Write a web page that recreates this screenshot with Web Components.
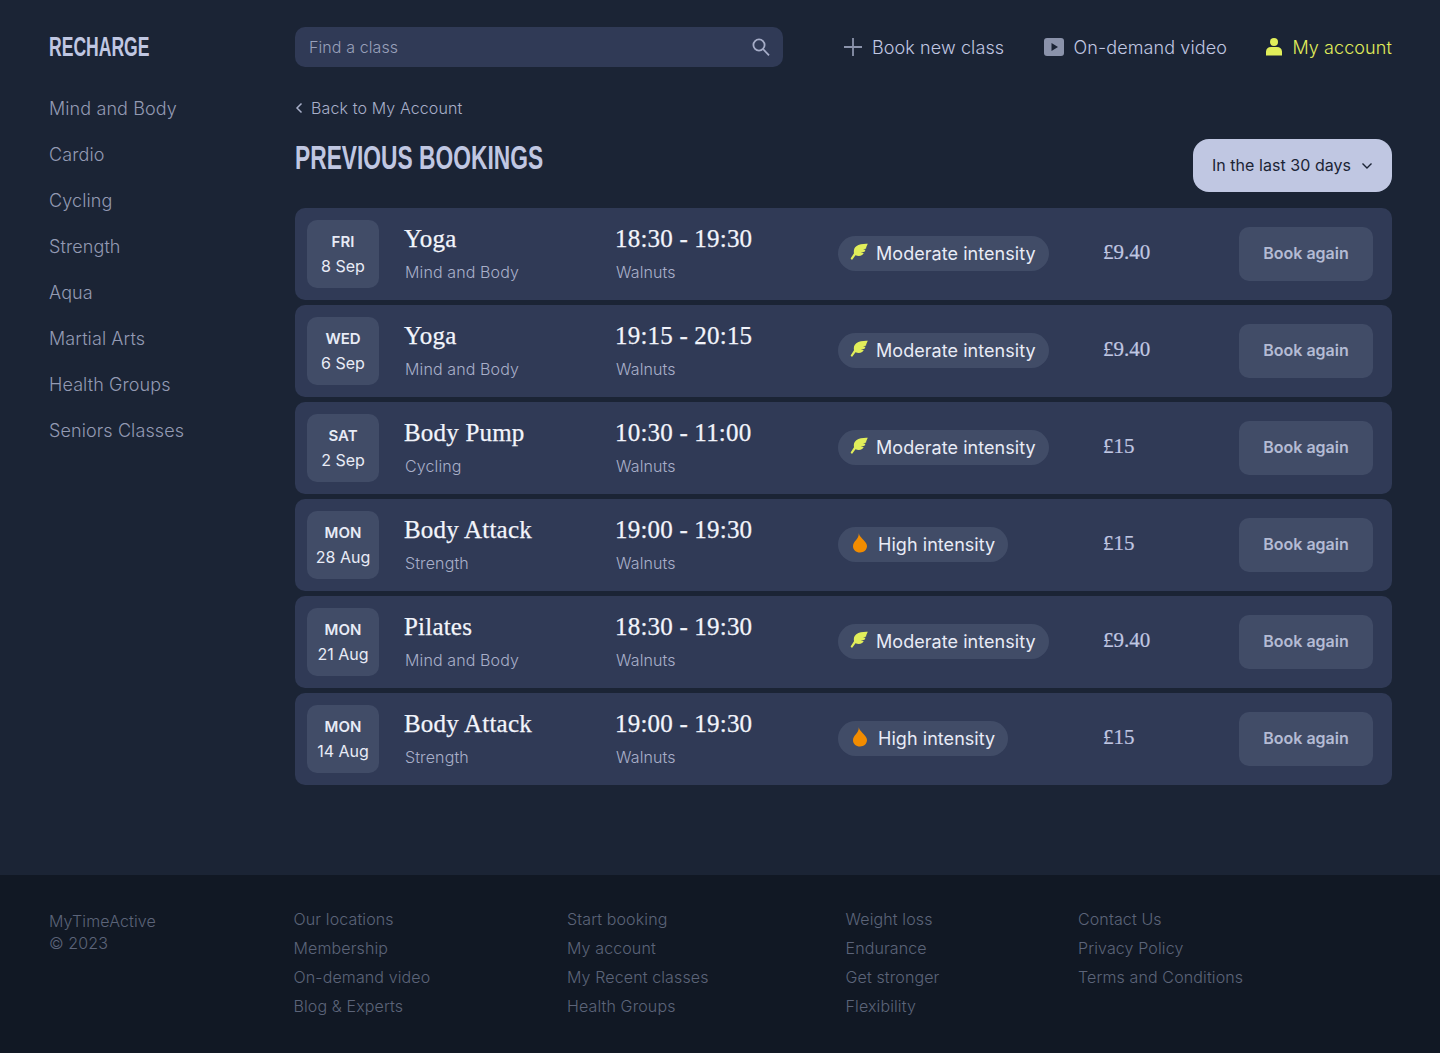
<!DOCTYPE html>
<html lang="en">
<head>
<meta charset="utf-8">
<title>Recharge - Previous bookings</title>
<style>
  html, body { margin: 0; background: #1b2435; }
  body { font-family: Inter, "Liberation Sans", sans-serif; min-height: 1053px; display: flex; flex-direction: column; }
</style>
</head>
<body>
<page-shell>
  <side-nav slot="side"></side-nav>
  <top-bar slot="top"></top-bar>
  <bookings-head></bookings-head>
  <booking-row day="FRI" date="8 Sep" name="Yoga" cat="Mind and Body" time="18:30 - 19:30" level="moderate" price="£9.40"></booking-row>
  <booking-row day="WED" date="6 Sep" name="Yoga" cat="Mind and Body" time="19:15 - 20:15" level="moderate" price="£9.40"></booking-row>
  <booking-row day="SAT" date="2 Sep" name="Body Pump" cat="Cycling" time="10:30 - 11:00" level="moderate" price="£15"></booking-row>
  <booking-row day="MON" date="28 Aug" name="Body Attack" cat="Strength" time="19:00 - 19:30" level="high" price="£15"></booking-row>
  <booking-row day="MON" date="21 Aug" name="Pilates" cat="Mind and Body" time="18:30 - 19:30" level="moderate" price="£9.40"></booking-row>
  <booking-row day="MON" date="14 Aug" name="Body Attack" cat="Strength" time="19:00 - 19:30" level="high" price="£15"></booking-row>
</page-shell>
<site-footer></site-footer>

<script>
// page frame: sidebar column + topbar + main list
class PageShell extends HTMLElement {
  connectedCallback() {
    this.attachShadow({ mode: "open" }).innerHTML = `
      <style>
        :host { display: grid; grid-template-columns: 246px 1fr; height: 875px; padding: 0 48px 0 49px; box-sizing: border-box; }
        .list { display: flex; flex-direction: column; gap: 5px; }
      </style>
      <slot name="side"></slot>
      <div>
        <slot name="top"></slot>
        <div class="list"><slot></slot></div>
      </div>`;
  }
}

class SideNav extends HTMLElement {
  connectedCallback() {
    const items = ["Mind and Body", "Cardio", "Cycling", "Strength", "Aqua", "Martial Arts", "Health Groups", "Seniors Classes"];
    this.attachShadow({ mode: "open" }).innerHTML = `
      <style>
        :host { display: block; }
        .logo { font: 700 27px/30px "Liberation Sans", sans-serif; color: #c0c7e2; margin-top: 32px; height: 30px; }
        .logo span { display: inline-block; transform: scaleX(.65); transform-origin: left; }
        ul { list-style: none; margin: 36px 0 0; padding: 0; display: flex; flex-direction: column; gap: 24px; }
        li { font: 300 18px/22px Inter, sans-serif; letter-spacing: .1px; color: #939ab3; }
      </style>
      <div class="logo"><span>RECHARGE</span></div>
      <ul>${items.map((i) => `<li>${i}</li>`).join("")}</ul>`;
  }
}

class TopBar extends HTMLElement {
  connectedCallback() {
    this.attachShadow({ mode: "open" }).innerHTML = `
      <style>
        :host { display: flex; align-items: center; padding-top: 27px; font: 300 18px/22px Inter, sans-serif; letter-spacing: .1px; color: #c0c7e2; }
        .search { width: 488px; height: 40px; box-sizing: border-box; background: #303a56; border-radius: 10px; padding: 0 12px 0 14px; display: flex; align-items: center; justify-content: space-between; margin-right: 61px; font-size: 16px; color: #98a0ba; }
        nav { display: flex; flex: 1; justify-content: space-between; align-items: center; }
        a { display: flex; align-items: center; gap: 10px; white-space: nowrap; }
        a span { margin-top: 2px; }
        a.me { color: #e1ee5a; }
        svg { display: block; flex: none; }
      </style>
      <div class="search">
        <span>Find a class</span>
        <svg width="20" height="20" viewBox="0 0 20 20" fill="none" stroke="#a6adc8" stroke-width="1.8"><circle cx="8" cy="8" r="5.6"/><path d="M12 12l6 6.4"/></svg>
      </div>
      <nav>
        <a><svg width="18" height="18" viewBox="0 0 18 18" stroke="#8b93ab" stroke-width="1.8"><path d="M9 0v18M0 9h18"/></svg><span>Book new class</span></a>
        <a><svg width="20" height="18" viewBox="0 0 20 18"><rect width="20" height="18" rx="3" fill="#8b93ab"/><path d="M7.500 5l6.500 4-6.500 4z" fill="#1b2435"/></svg><span>On-demand video</span></a>
        <a class="me"><svg width="16" height="18" viewBox="0 0 16 18" fill="#e1ee5a"><circle cx="8" cy="4" r="4"/><path d="M0 17.500v-4a5 5 0 0 1 5-4.500h6a5 5 0 0 1 5 4.500v4z"/></svg><span>My account</span></a>
      </nav>`;
  }
}

class BookingsHead extends HTMLElement {
  connectedCallback() {
    this.attachShadow({ mode: "open" }).innerHTML = `
      <style>
        :host { display: block; padding-top: 31px; margin-bottom: 11px; }
        .back { display: flex; align-items: center; gap: 8px; font: 300 16px/20px Inter, sans-serif; letter-spacing: .12px; color: #a8afc9; height: 20px; }
        .row { display: flex; justify-content: space-between; align-items: flex-start; margin-top: 21px; }
        h1 { margin: -2px 0 0; font: 700 34px/40px "Liberation Sans", sans-serif; color: #c0c7e2; transform: scaleX(.67); transform-origin: left; white-space: nowrap; }
        .filter { width: 199px; height: 53px; box-sizing: border-box; padding-bottom: 1px; background: #c0c7e2; border-radius: 16px; color: #1b2435; font: 400 16px/20px Inter, sans-serif; letter-spacing: .05px; display: flex; align-items: center; justify-content: center; gap: 9px; }
        .filter svg { margin: 2px 0 0 1px; }
      </style>
      <div class="back"><svg width="8" height="12" viewBox="0 0 8 12" fill="none" stroke="#a8afc9" stroke-width="1.5"><path d="M6.500 1.500L2 6l4.500 4.500"/></svg>Back to My Account</div>
      <div class="row">
        <h1>PREVIOUS BOOKINGS</h1>
        <div class="filter">In the last 30 days<svg width="12" height="8" viewBox="0 0 12 8" fill="none" stroke="#1b2435" stroke-width="1.4"><path d="M1.500 1.500L6 6l4.500-4.500"/></svg></div>
      </div>`;
  }
}

class IntensityPill extends HTMLElement {
  connectedCallback() {
    const high = this.getAttribute("level") === "high";
    const leaf = `<svg width="18" height="18" viewBox="0 0 18 18"><path d="M17.800.8C13.500.6 9.200 1.200 6.300 3.300 4 5 3.500 7.500 4 10.200L.6 15.600 2 17l3.500-4.700c2.300 1 4.600 1 6.600-.2.900-.6 1.400-1.300 1.600-2l-3-.3 3.800-1c.5-.7.800-1.400.9-2.100l-2.300-.2 3-1C16.100 4.100 17 2.500 17.800.8z" fill="#e1ee5a"/></svg>`;
    const flame = `<svg width="16" height="20" viewBox="0 0 16 20"><path d="M6.800.3c.4 2.400 2 3.800 3.700 5.700C12.300 8 15 10 15 13.100 15 16.900 12 19.500 8 19.500s-7-2.600-7-6.300c0-2.500 1.300-4.300 2.900-6C5.500 5.500 6.800 3.600 6.800.3z" fill="#f28c00"/></svg>`;
    this.attachShadow({ mode: "open" }).innerHTML = `
      <style>
        :host { display: inline-flex; align-items: center; height: 35px; margin-top: -2px; box-sizing: border-box; background: #414c67; border-radius: 18px; color: #e8ebf6; font: 400 18px/22px Inter, sans-serif; letter-spacing: .05px; white-space: nowrap; padding: 1px 13px 0 ${high ? 14 : 12}px; gap: ${high ? 10 : 8}px; vertical-align: top; }
        svg { display: block; flex: none; margin-top: -3px; }
      </style>
      ${high ? flame : leaf}<slot></slot>`;
  }
}

class BookingRow extends HTMLElement {
  connectedCallback() {
    const a = (n) => this.getAttribute(n) || "";
    const label = a("level") === "high" ? "High intensity" : "Moderate intensity";
    this.attachShadow({ mode: "open" }).innerHTML = `
      <style>
        :host { display: grid; grid-template-columns: 97px 211px 223px 265px 1fr 134px; align-items: center; height: 92px; box-sizing: border-box; padding: 0 19px 0 12px; background: #303a56; border-radius: 10px; }
        .date { width: 72px; height: 68px; padding-bottom: 2px; box-sizing: border-box; background: #414c67; border-radius: 10px; display: flex; flex-direction: column; align-items: center; justify-content: center; color: #e8ebf6; font: 400 16px/24px Inter, sans-serif; }
        .date b { font-weight: 600; font-size: 15px; margin-top: 1px; }
        .main { font: 400 25px/30px "Liberation Serif", serif; letter-spacing: .2px; -webkit-text-stroke: .25px #f2f4fb; color: #f2f4fb; }
        .sub { font: 300 16px/20px Inter, sans-serif; letter-spacing: .12px; color: #a8afc9; margin: 8px 0 0 1px; -webkit-text-stroke: 0; }
        .cell { margin-top: -3px; }
        .price { font: 400 21px/24px "Liberation Serif", serif; -webkit-text-stroke: .2px #c0c7e2; color: #c0c7e2; margin-top: -4px; }
        .again { height: 54px; background: #414c67; border-radius: 10px; color: #b4bbd4; font: 600 16px/53px Inter, sans-serif; text-align: center; }
      </style>
      <div class="date"><b>${a("day")}</b><span>${a("date")}</span></div>
      <div class="cell"><div class="main">${a("name")}</div><div class="sub">${a("cat")}</div></div>
      <div class="cell"><div class="main">${a("time")}</div><div class="sub">Walnuts</div></div>
      <div><intensity-pill level="${a("level")}">${label}</intensity-pill></div>
      <div class="price">${a("price")}</div>
      <div class="again">Book again</div>`;
  }
}

class SiteFooter extends HTMLElement {
  connectedCallback() {
    const cols = [
      ["Our locations", "Membership", "On-demand video", "Blog & Experts"],
      ["Start booking", "My account", "My Recent classes", "Health Groups"],
      ["Weight loss", "Endurance", "Get stronger", "Flexibility"],
      ["Contact Us", "Privacy Policy", "Terms and Conditions"],
    ];
    this.attachShadow({ mode: "open" }).innerHTML = `
      <style>
        :host { display: grid; grid-template-columns: 244.500px 273.500px 278.500px 232.500px 1fr; flex: 1; box-sizing: border-box; height: 178px; padding: 33px 48px 0 49px; background: #111824; color: #5c6479; font: 300 16px/22px Inter, sans-serif; letter-spacing: .12px; }
        .brand { padding-top: 2px; }
        ul { list-style: none; margin: 0; padding: 0; display: flex; flex-direction: column; gap: 7px; }
      </style>
      <div class="brand">MyTimeActive<br>© 2023</div>
      ${cols.map((c) => `<ul>${c.map((t) => `<li>${t.replace("&", "&amp;")}</li>`).join("")}</ul>`).join("")}`;
  }
}

customElements.define("page-shell", PageShell);
customElements.define("side-nav", SideNav);
customElements.define("top-bar", TopBar);
customElements.define("bookings-head", BookingsHead);
customElements.define("intensity-pill", IntensityPill);
customElements.define("booking-row", BookingRow);
customElements.define("site-footer", SiteFooter);
</script>
</body>
</html>
